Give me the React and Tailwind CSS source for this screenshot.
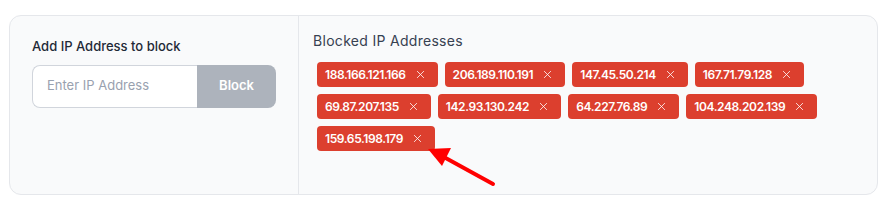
const ips = [
  "188.166.121.166",
  "206.189.110.191",
  "147.45.50.214",
  "167.71.79.128",
  "69.87.207.135",
  "142.93.130.242",
  "64.227.76.89",
  "104.248.202.139",
  "159.65.198.179",
];

function Tag({ ip }) {
  return (
    <span className="flex h-[25px] items-center rounded-[4px] bg-[#dc3f2e] pl-2 pr-[13px] text-[12px] font-semibold tracking-[-0.4px] text-white">
      <span>{ip}</span>
      <svg className="ml-[10px] h-[9px] w-[9px] text-white/80" viewBox="0 0 10 10" fill="none" stroke="currentColor" strokeWidth="1.1" strokeLinecap="round">
        <path d="M1.5 1.5l7 7M8.5 1.5l-7 7" />
      </svg>
    </span>
  );
}

export default function App() {
  return (
    <div className="relative h-[217px] w-[893px] bg-white px-[9px] pt-[15px]" style={{ fontFamily: "Inter, 'Noto Sans', sans-serif" }}>
      <div className="flex h-[180px] w-[869px] overflow-hidden rounded-xl border border-gray-200 bg-[#f9fafb]">
        <div className="w-[289px] shrink-0 border-r border-gray-200 pl-[22px] pr-[22px] pt-[21px]">
          <div className="text-[13px] font-medium text-[#1f2937]">Add IP Address to block</div>
          <div className="mt-[8px] flex h-[43px]">
            <div className="flex flex-1 items-center rounded-l-lg border border-r-0 border-gray-300 bg-white pl-[14px] text-[13px] text-gray-400">
              Enter IP Address
            </div>
            <div className="flex w-[79px] items-center justify-center rounded-r-lg bg-[#adb3bc] text-[13px] font-semibold text-white">
              Block
            </div>
          </div>
        </div>
        <div className="flex-1 pl-[14px] pt-[14px]">
          <div className="text-[14px] tracking-[0.3px] text-[#374151]">Blocked IP Addresses</div>
          <div className="mt-[11px] flex w-[540px] flex-wrap gap-x-[7px] gap-y-[7px] pl-[4px]">
            {ips.map((ip) => (
              <Tag key={ip} ip={ip} />
            ))}
          </div>
        </div>
      </div>
      <svg className="pointer-events-none absolute left-[420px] top-[140px]" width="90" height="55" viewBox="0 0 90 55">
        <path d="M73 44L22 16" stroke="#ff0000" strokeWidth="4" strokeLinecap="round" />
        <path d="M8 9L31 8L22 26Z" fill="#ff0000" />
      </svg>
    </div>
  );
}
